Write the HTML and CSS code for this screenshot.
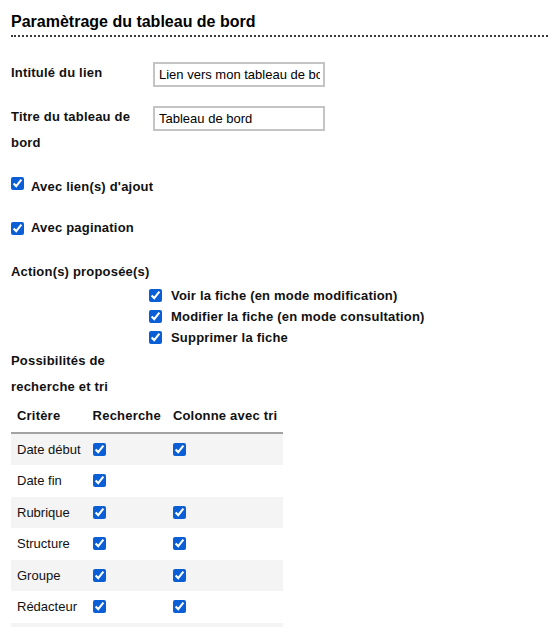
FILE: index.html
```html
<!DOCTYPE html>
<html lang="fr">
<head>
<meta charset="utf-8">
<title>Paramètrage du tableau de bord</title>
<link rel="stylesheet" href="styles.css">
</head>
<body>
<div class="page">
  <h1 class="title">Paramètrage du tableau de bord</h1>

  <div class="field field--first">
    <label class="field-label" for="lien">Intitulé du lien</label>
    <input class="text-input" id="lien" type="text" value="Lien vers mon tableau de bord">
  </div>

  <div class="field field--second">
    <label class="field-label" for="titre">Titre du tableau de bord</label>
    <input class="text-input" id="titre" type="text" value="Tableau de bord">
  </div>

  <div class="check-line check-line--ajout">
    <input class="box box--base" id="ajout" type="checkbox" checked><label class="check-text" for="ajout">Avec lien(s) d'ajout</label>
  </div>

  <div class="check-line check-line--pagination">
    <input class="box box--mid" id="pagination" type="checkbox" checked><label class="check-text" for="pagination">Avec pagination</label>
  </div>

  <div class="section-label section-label--actions">Action(s) proposée(s)</div>
  <ul class="actions">
    <li class="action"><input class="box box--mid" id="a1" type="checkbox" checked><label class="check-text" for="a1">Voir la fiche (en mode modification)</label></li>
    <li class="action"><input class="box box--mid" id="a2" type="checkbox" checked><label class="check-text" for="a2">Modifier la fiche (en mode consultation)</label></li>
    <li class="action"><input class="box box--mid" id="a3" type="checkbox" checked><label class="check-text" for="a3">Supprimer la fiche</label></li>
  </ul>

  <div class="section-label section-label--search">Possibilités de recherche et tri</div>

  <table class="criteria">
    <thead>
      <tr>
        <th>Critère</th>
        <th>Recherche</th>
        <th>Colonne avec tri</th>
      </tr>
    </thead>
    <tbody>
      <tr class="odd"><td>Date début</td><td><input class="box" type="checkbox" checked></td><td><input class="box" type="checkbox" checked></td></tr>
      <tr><td>Date fin</td><td><input class="box" type="checkbox" checked></td><td></td></tr>
      <tr class="odd"><td>Rubrique</td><td><input class="box" type="checkbox" checked></td><td><input class="box" type="checkbox" checked></td></tr>
      <tr><td>Structure</td><td><input class="box" type="checkbox" checked></td><td><input class="box" type="checkbox" checked></td></tr>
      <tr class="odd"><td>Groupe</td><td><input class="box" type="checkbox" checked></td><td><input class="box" type="checkbox" checked></td></tr>
      <tr><td>Rédacteur</td><td><input class="box" type="checkbox" checked></td><td><input class="box" type="checkbox" checked></td></tr>
      <tr class="odd filler"><td></td><td></td><td></td></tr>
    </tbody>
  </table>
</div>
</body>
</html>
```

FILE: styles.css
```css
html, body {
  margin: 0;
  padding: 0;
  background: #ffffff;
}

body {
  font-family: "Liberation Sans", Arial, sans-serif;
  font-size: 13px;
  color: #111111;
}

.page {
  padding-left: 11px;
}

.title {
  margin: 0;
  padding: 12px 0 3px 0;
  font-size: 16px;
  line-height: 20px;
  font-weight: bold;
  color: #000000;
  border-bottom: 2px dotted #3a3a3a;
}

.field {
  display: grid;
  grid-template-columns: 142px 172px;
  align-items: start;
}

.field--first {
  margin-top: 23px;
}

.field--second {
  margin-top: 17px;
}

.field-label {
  font-weight: bold;
  line-height: 26px;
  letter-spacing: 0.2px;
}

.text-input {
  box-sizing: border-box;
  margin: 2px 0 0 0;
  width: 172px;
  height: 25px;
  padding: 0 3px 0 4px;
  border: 2px solid #c4c4c4;
  border-radius: 0;
  font-family: "Liberation Sans", Arial, sans-serif;
  font-size: 13px;
  color: #000000;
  background: #ffffff;
  outline: none;
}

.box {
  width: 13px;
  height: 13px;
  margin: 0;
  accent-color: #0a5ed6;
}

.box--base {
  vertical-align: 1px;
}

.box--mid {
  vertical-align: middle;
  position: relative;
  top: -1px;
}

.check-line {
  line-height: 26px;
  font-weight: bold;
  letter-spacing: 0.2px;
}

.check-line--ajout {
  margin-top: 18px;
}

.check-line--pagination {
  margin-top: 15px;
}

.check-line--pagination .box--mid {
  top: 0;
}

.check-text {
  margin-left: 7px;
}

.section-label {
  font-weight: bold;
  line-height: 26px;
  letter-spacing: 0.2px;
}

.section-label--actions {
  margin-top: 18px;
}

.section-label--search {
  width: 142px;
}

.actions {
  list-style: none;
  margin: 0;
  padding: 0 0 0 138px;
}

.action {
  line-height: 21px;
  height: 21px;
  font-weight: bold;
  letter-spacing: 0.2px;
}

.action .check-text {
  margin-left: 9px;
}

.criteria {
  border-collapse: collapse;
  margin: 0;
}

.criteria th {
  height: 31.5px;
  padding: 0 6px;
  text-align: left;
  font-weight: bold;
  letter-spacing: 0.2px;
  vertical-align: middle;
  border-bottom: 2px solid #a3a3a3;
  white-space: nowrap;
}

.criteria td {
  height: 31.5px;
  padding: 0 6px;
  vertical-align: middle;
  white-space: nowrap;
}

.criteria td .box {
  display: block;
}

.criteria tr.odd td {
  background: #f4f4f4;
}

.criteria tr.filler td {
  height: 4.5px;
  padding: 0;
}
```
